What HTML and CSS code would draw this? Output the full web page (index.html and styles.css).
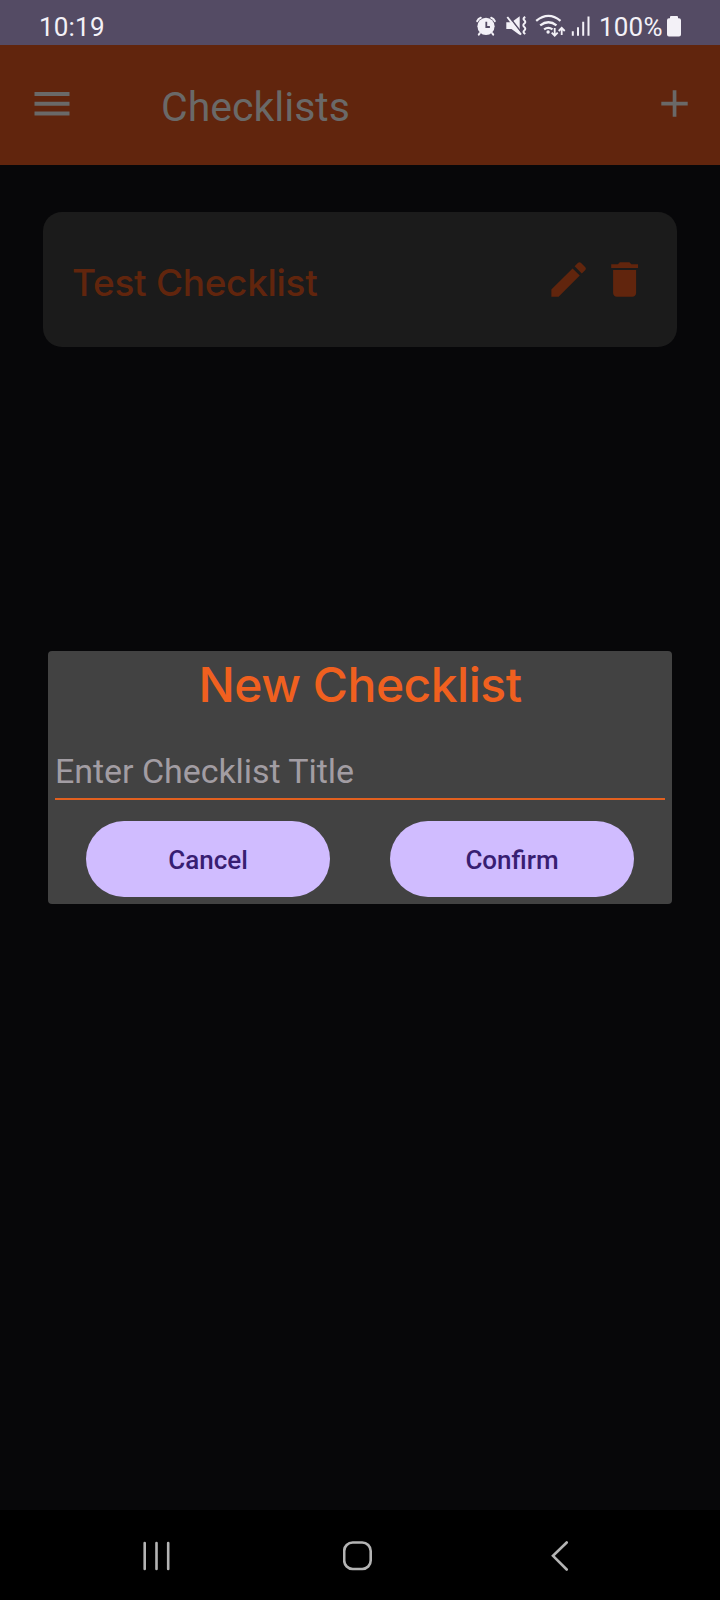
FILE: index.html
```html
<!DOCTYPE html>
<html lang="en">
<head>
<meta charset="utf-8">
<title>Checklists</title>
<link rel="stylesheet" href="styles.css">
</head>
<body>
<div class="screen">
  <header class="status">
    <span class="clock">10:19</span>
    <div class="indicators">
      <svg class="glyphs" width="116" height="24" viewBox="474 14 116 24" fill="none" stroke="#f3f1f7">
        <g stroke-width="2" stroke-linecap="round"><path d="M477.2 21.2q1-2.6 3.6-3.4M494.8 21.2q-1-2.6-3.6-3.4M479.8 33.2l-1 1.4M492.2 33.2l1 1.4"/></g>
        <circle cx="486" cy="26.3" r="8.6" fill="#f3f1f7" stroke="none"/>
        <path d="M486.3 21.8v5.2h3.6" stroke="#544b64" stroke-width="1.8"/>
        <path d="M506.300 22.200h5.200l8.200-6v18.700l-8.200-5.900h-5.200z" fill="#f3f1f7" stroke="none"/>
        <path d="M508.800 16.200l14 18.300" stroke="#544b64" stroke-width="1.700"/>
        <path d="M507.300 17l13.700 17.600" stroke="#f3f1f7" stroke-width="1.900"/>
        <path d="M525.300 17q-3 1.500-1 3.200t0 3.400 0 3.400 0 3.400 1 3.600" stroke-width="2"/>
        <g stroke-width="2.300"><path d="M536.200 20.800q12.300-9.800 24.300 0M540.200 25.400q8.300-6.300 16.300 0M544.100 29.400q4.200-3 8.400 0"/></g>
        <circle cx="548.100" cy="32" r="1.700" fill="#f3f1f7" stroke="none"/>
        <path d="M554.700 28v7.500M551.700 32.600l3 3.100 3-3.100M561.700 35v-6.800M558.700 31l3-3.100 3 3.100" stroke-width="1.800"/>
        <path d="M572.800 31.300v4.500M578 27.300v8.500M583.200 21.700v14.100M588.500 16.500v19.300" stroke-width="2"/>
      </svg>
      <span class="percent">100%</span>
      <svg class="battery" width="14" height="21" viewBox="0 0 14 21" fill="#f3f1f7"><path d="M4 0h6q1 0 1 1v1.200h1q2 0 2 2V18.500q0 2-2 2H2q-2 0-2-2V4.200q0-2 2-2h1V1q0-1 1-1z"/></svg>
    </div>
  </header>

  <div class="appbar">
    <svg width="36" height="24" viewBox="0 0 36 24" fill="#6a6968"><path d="M.5 0H35.500v4H.5zM.5 9.800H35.500v4H.5zM.5 19.600H35.500v4H.5z"/></svg>
    <h1 class="heading">Checklists</h1>
    <svg class="add" width="27" height="27" viewBox="0 0 27 27" fill="#6a6968"><path d="M11.700 .3h3.700v11.500H26.700v3.700H15.400v11.300h-3.700V15.500H.3v-3.700h11.400z"/></svg>
  </div>

  <main class="content">
    <article class="card">
      <h2 class="card-title">Test Checklist</h2>
      <svg class="icon" viewBox="0.2 0.25 24 24"><path d="M3 17.250V21h3.750L17.810 9.940l-3.750-3.750L3 17.250zM20.710 7.040c.39-.39.39-1.020 0-1.410l-2.340-2.340a.996.996 0 0 0-1.410 0l-1.830 1.830 3.750 3.750 1.830-1.830z"/></svg>
      <svg class="icon" viewBox="0.2 0.25 24 24"><path d="M6 19c0 1.100.9 2 2 2h8c1.100 0 2-.9 2-2V7H6v12zM19 4h-3.500l-1-1h-5l-1 1H5v2h14V4z"/></svg>
    </article>

    <section class="dialog">
      <h2 class="dialog-title">New Checklist</h2>
      <div class="field">Enter Checklist Title</div>
      <div class="actions">
        <button class="pill">Cancel</button>
        <button class="pill">Confirm</button>
      </div>
    </section>
  </main>

  <nav class="navbar">
    <svg width="27" height="30" viewBox="0 0 27 30" fill="none" stroke="#b4b4b4" stroke-width="2.600" stroke-linecap="round"><path d="M1.700 2v26M13.500 2v26M25.200 2v26"/></svg>
    <svg class="home" width="30" height="30" viewBox="0 0 30 30" fill="none" stroke="#b4b4b4" stroke-width="2.600"><rect x="1.200" y="1.500" width="26.500" height="26.500" rx="8.500"/></svg>
    <svg class="back" width="18" height="30" viewBox="0 0 18 30" fill="none" stroke="#b4b4b4" stroke-width="2.600" stroke-linecap="round"><path d="M15.700 1.500L2 14.800 15.700 28.500"/></svg>
  </nav>
</div>
</body>
</html>
```
FILE: styles.css
```css
* { box-sizing: border-box; }
body { margin: 0; background: #070709; font-family: Roboto, "Liberation Sans", sans-serif; }
h1, h2 { margin: 0; }
svg { display: block; flex: none; }
.screen { width: 720px; height: 1600px; display: flex; flex-direction: column; overflow: hidden; }

.status { height: 45px; flex: none; background: #544b64; color: #f3f1f7; display: flex; justify-content: space-between; padding: 0 39px 0 39px; font-size: 26px; }
.clock { line-height: 30px; padding-top: 12px; letter-spacing: 0.2px; }
.indicators { display: flex; }
.glyphs { margin-top: 14px; }
.percent { line-height: 30px; padding-top: 12px; width: 64px; margin-left: 9px; white-space: nowrap; letter-spacing: 0.2px; }
.battery { margin: 16px 0 0 4px; }

.appbar { height: 120px; flex: none; background: #61250d; display: flex; align-items: flex-start; padding: 0 32px 0 34px; }
.appbar svg { margin-top: 47px; }
.appbar .add { margin: 45px 0 0 auto; }
.heading { color: #6a6968; font-size: 41px; font-weight: 400; line-height: 48px; margin: 38px 0 0 91px; }

.content { flex: 1; padding: 47px 43px 0; }
.card { height: 135px; border-radius: 19px; background: #1b1b1b; display: flex; align-items: center; padding: 0 29px 0 29px; gap: 10px; }
.card-title { flex: 1; color: #61250d; font: 500 37px/48px Inter, sans-serif; letter-spacing: -0.3px; padding-top: 6px; white-space: nowrap; }
.icon { width: 46px; height: 46px; fill: #61250d; }

.dialog { margin: 304px 5px 0; height: 253px; background: #424242; border-radius: 4px; padding: 0 7px; }
.dialog-title { color: #f0601f; font: 500 48px/66px Inter, sans-serif; letter-spacing: -0.5px; text-align: center; white-space: nowrap; padding-top: 1px; }
.field { height: 82px; border-bottom: 2px solid #e2601f; color: #a29da3; font-size: 34px; line-height: 40px; padding-top: 33px; letter-spacing: -0.05px; }
.actions { display: flex; justify-content: space-between; padding: 21px 31px 0; }
.pill { width: 244px; height: 76px; border: 0; border-radius: 38px; background: #d0bcff; color: #381e72; font: 500 26px/30px Roboto, sans-serif; padding: 2px 0 0; }

.navbar { height: 90px; flex: none; background: #000; display: flex; padding: 31px 0 0 143px; }
.home { margin-left: 173px; }
.back { margin-left: 178px; }
```
